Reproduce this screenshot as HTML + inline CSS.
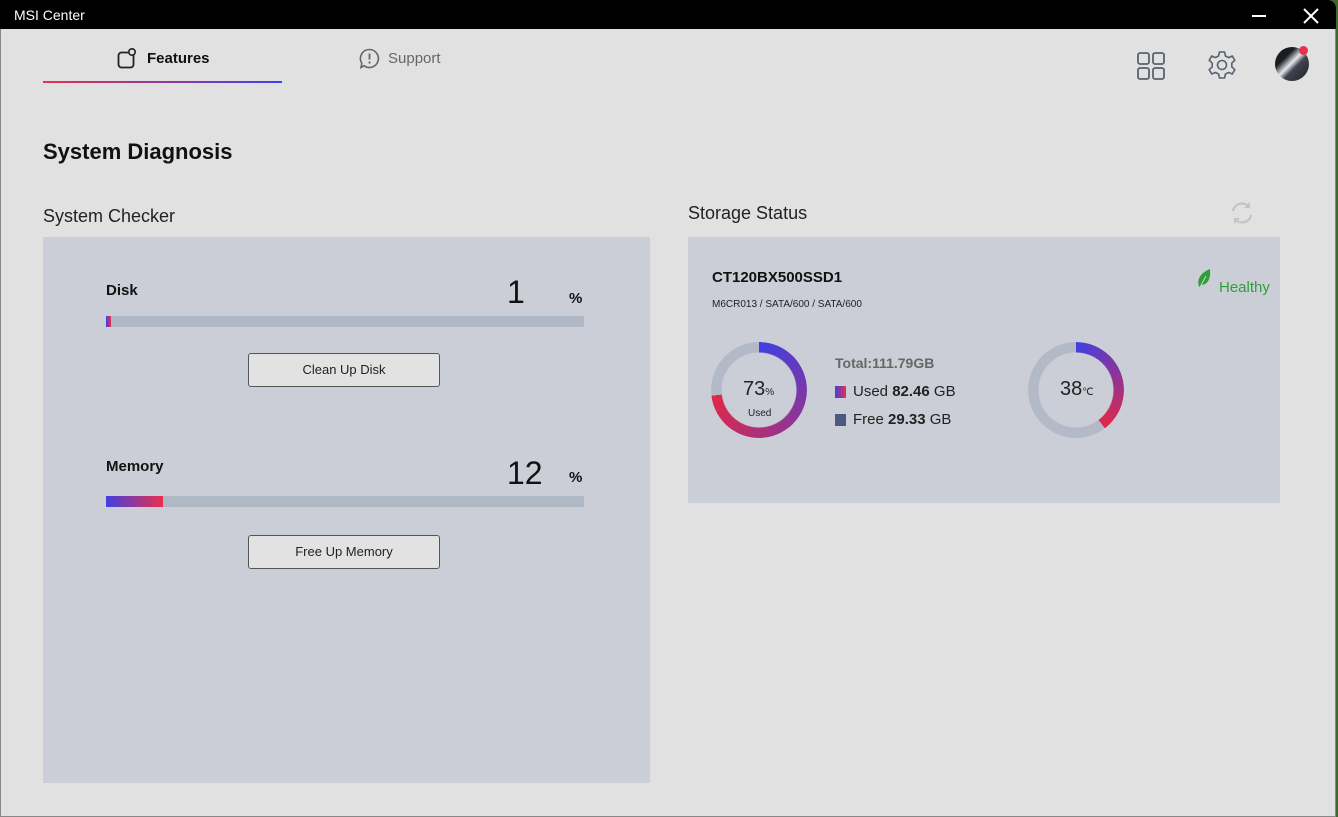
<!DOCTYPE html>
<html><head><meta charset="utf-8"><style>
*{margin:0;padding:0;box-sizing:border-box}
body{width:1338px;height:817px;background:#3a6a2a;font-family:"Liberation Sans",sans-serif;position:relative;overflow:hidden}
.win{position:absolute;left:0;top:0;width:1336px;height:817px;background:#e1e1e1;box-shadow:inset 0 0 0 1px #888;border-radius:0 8px 0 0;overflow:hidden}
.tb{height:29px;background:#000;color:#fff;font-size:14px;padding:7px 0 0 14px;position:relative}
.abs{position:absolute}
.panel{position:absolute;background:#cbced6}
.bar{position:absolute;height:11px;background:#b0b7c5}
.btn{position:absolute;width:192px;height:34px;border:1px solid #555;border-radius:3px;background:#e2e2e2;font-size:13px;text-align:center;line-height:32px;color:#222}
.ring{position:absolute;width:96px;height:96px;border-radius:50%;-webkit-mask:radial-gradient(circle,transparent 37px,#000 38px);mask:radial-gradient(circle,transparent 37px,#000 38px)}
</style></head><body>
<div class="win">
 <div class="tb">MSI Center
  <div class="abs" style="left:1252px;top:15px;width:14px;height:2px;background:#fff"></div>
  <svg class="abs" style="left:1303px;top:8px" width="16" height="16"><path d="M1 1L15 15M15 1L1 15" stroke="#fff" stroke-width="2"/></svg>
 </div>
 <svg class="abs" style="left:117px;top:48px" width="20" height="21"><rect x="1.5" y="4.5" width="15" height="15" rx="3" fill="none" stroke="#222" stroke-width="1.8"/><circle cx="15" cy="4" r="3.2" fill="#e1e1e1" stroke="#222" stroke-width="1.6"/></svg>
 <div class="abs" style="left:147px;top:50px;font-size:15px;font-weight:bold;color:#111">Features</div>
 <div class="abs" style="left:43px;top:81px;width:239px;height:2px;background:linear-gradient(90deg,#e8304c,#4040f0)"></div>
 <svg class="abs" style="left:359px;top:48px" width="21" height="21"><path d="M10.5 1.5a9 9 0 1 1-5.5 16.2L2 19.5l.8-4.2A9 9 0 0 1 10.5 1.5z" fill="none" stroke="#666" stroke-width="1.6"/><path d="M10.5 5.5v6" stroke="#666" stroke-width="1.8"/><circle cx="10.5" cy="14.5" r="1.1" fill="#666"/></svg>
 <div class="abs" style="left:388px;top:50px;font-size:15px;color:#666">Support</div>
 <svg class="abs" style="left:1137px;top:52px" width="28" height="28"><g fill="none" stroke="#5a6170" stroke-width="1.8"><rect x="1" y="1" width="11" height="11" rx="2"/><rect x="16" y="1" width="11" height="11" rx="2"/><rect x="1" y="16" width="11" height="11" rx="2"/><rect x="16" y="16" width="11" height="11" rx="2"/></g></svg>
 <svg class="abs" style="left:1207px;top:50px" width="30" height="30" viewBox="0 0 30 30"><path d="M12.5 2h5l1 4 3 1.6 3.8-1.6 2.5 4.3-3 2.8v3.8l3 2.8-2.5 4.3-3.8-1.6-3 1.6-1 4h-5l-1-4-3-1.6-3.8 1.6-2.5-4.3 3-2.8v-3.8l-3-2.8 2.5-4.3 3.8 1.6 3-1.6z" fill="none" stroke="#5a6170" stroke-width="1.6" stroke-linejoin="round"/><circle cx="15" cy="15" r="4.5" fill="none" stroke="#5a6170" stroke-width="1.6"/></svg>
 <div class="abs" style="left:1275px;top:47px;width:34px;height:34px;border-radius:50%;background:linear-gradient(135deg,#1a1c24 30%,#e8e8ee 48%,#40444e 60%,#20222a)"></div>
 <div class="abs" style="left:1299px;top:46px;width:9px;height:9px;border-radius:50%;background:#e8304c"></div>

 <div class="abs" style="left:43px;top:139px;font-size:22px;font-weight:bold;color:#111">System Diagnosis</div>
 <div class="abs" style="left:43px;top:206px;font-size:18px;color:#222">System Checker</div>
 <div class="panel" style="left:43px;top:237px;width:607px;height:546px"></div>
 <div class="abs" style="left:106px;top:282px;font-size:15px;font-weight:bold;color:#111">Disk</div>
 <div class="abs" style="left:507px;top:274px;font-size:32px;color:#111">1</div>
 <div class="abs" style="left:569px;top:290px;font-size:15px;font-weight:bold;color:#111">%</div>
 <div class="bar" style="left:106px;top:316px;width:478px"></div>
 <div class="abs" style="left:106px;top:316px;width:5px;height:11px;background:linear-gradient(90deg,#4040e0,#e8304c)"></div>
 <div class="btn" style="left:248px;top:353px">Clean Up Disk</div>
 <div class="abs" style="left:106px;top:458px;font-size:15px;font-weight:bold;color:#111">Memory</div>
 <div class="abs" style="left:507px;top:455px;font-size:32px;color:#111">12</div>
 <div class="abs" style="left:569px;top:469px;font-size:15px;font-weight:bold;color:#111">%</div>
 <div class="bar" style="left:106px;top:496px;width:478px"></div>
 <div class="abs" style="left:106px;top:496px;width:57px;height:11px;background:linear-gradient(90deg,#4040e0,#e8304c)"></div>
 <div class="btn" style="left:248px;top:535px">Free Up Memory</div>

 <div class="abs" style="left:688px;top:203px;font-size:18px;color:#222">Storage Status</div>
 <svg class="abs" style="left:1229px;top:200px" width="26" height="26"><g fill="none" stroke="#c4c4c8" stroke-width="2.2"><path d="M4 11a9 9 0 0 1 16-4"/><path d="M22 15a9 9 0 0 1-16 4"/></g><path d="M21 2v6h-6z" fill="#c4c4c8"/><path d="M5 24v-6h6z" fill="#c4c4c8"/></svg>
 <div class="panel" style="left:688px;top:237px;width:592px;height:266px"></div>
 <div class="abs" style="left:712px;top:269px;font-size:15px;font-weight:bold;color:#111">CT120BX500SSD1</div>
 <div class="abs" style="left:712px;top:299px;font-size:10px;color:#222">M6CR013 / SATA/600 / SATA/600</div>
 <svg class="abs" style="left:1196px;top:268px" width="16" height="22"><path d="M4 20C0 14 3 5 14 1c1 9-2 16-9 16z" fill="#2ea03a"/><path d="M3 21L10 8" stroke="#cbced6" stroke-width="1"/></svg>
 <div class="abs" style="left:1219px;top:279px;font-size:15px;color:#2ea03a">Healthy</div>

 <div class="ring" style="left:711px;top:342px;background:conic-gradient(#4040e0 0deg,#e02848 263deg,#b4b9c8 263deg)"></div>
 <div class="abs" style="left:743px;top:378px;font-size:20px;color:#222">73<span style="font-size:10px">%</span></div>
 <div class="abs" style="left:748px;top:408px;font-size:10px;color:#222">Used</div>
 <div class="abs" style="left:835px;top:355px;font-size:14px;color:#666;font-weight:bold">Total:111.79GB</div>
 <div class="abs" style="left:835px;top:386px;width:11px;height:12px;background:linear-gradient(90deg,#4040e0,#e8304c)"></div>
 <div class="abs" style="left:853px;top:383px;font-size:15px;color:#222">Used <b>82.46</b> GB</div>
 <div class="abs" style="left:835px;top:414px;width:11px;height:12px;background:#4a5a80"></div>
 <div class="abs" style="left:853px;top:411px;font-size:15px;color:#222">Free <b>29.33</b> GB</div>

 <div class="ring" style="left:1028px;top:342px;background:conic-gradient(#4040e0 0deg,#e02848 143deg,#b4b9c8 143deg)"></div>
 <div class="abs" style="left:1060px;top:378px;font-size:20px;color:#222">38<span style="font-size:10px">℃</span></div>
</div>
</body></html>
